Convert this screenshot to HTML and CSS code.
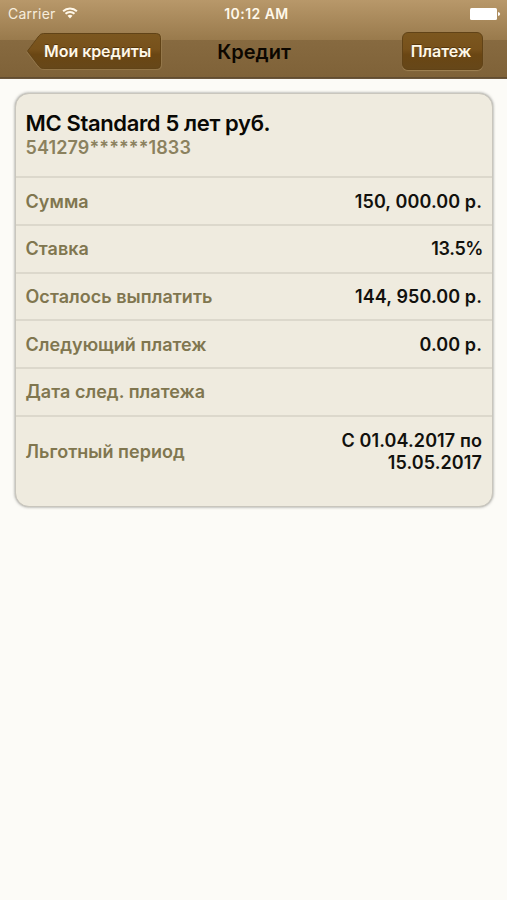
FILE: index.html
```html
<!DOCTYPE html>
<html lang="ru">
<head>
<meta charset="utf-8">
<title>Кредит</title>
<link rel="stylesheet" href="styles.css">
</head>
<body>
<header class="header">
  <div class="status">
    <div class="carrier"><span class="carrier-name">Carrier</span>
      <svg class="wifi" viewBox="0 0 16 12" width="16" height="12" fill="none" stroke="#fff8ea" stroke-width="1.9"><path d="M1.1 4.2a10 10 0 0 1 13.800 0M3.500 6.800a6.600 6.600 0 0 1 9 0"/><path d="M5.500 8.800a3.700 3.700 0 0 1 5 0L8 11.400z" fill="#fff8ea" stroke="none"/></svg>
    </div>
    <span class="time">10:12 AM</span>
    <svg class="battery" viewBox="0 0 31 12" width="31" height="12" fill="#fff"><rect width="27" height="12" rx="1.5"/><path d="M28 4q2.200 .4 2.200 2t-2.200 2z"/></svg>
  </div>
  <nav class="nav">
    <div class="back">
      <svg class="back-shape" viewBox="0 0 137 39" width="137" height="39">
        <defs><linearGradient id="brown" x1="0" y1="0" x2="0" y2="1"><stop offset="0" stop-color="#7c571f"/><stop offset=".45" stop-color="#77511b"/><stop offset=".6" stop-color="#6a4613"/><stop offset="1" stop-color="#664719"/></linearGradient></defs>
        <path d="M.8 20 12.500 4q2-2.500 5-2.500H131q4.500 0 4.500 4.500V33q0 4.500-4.500 4.500H17.500q-3 0-5-2.500z" fill="none" stroke="#a98b5c" stroke-opacity=".45"/>
        <path d="M1.500 19 12.800 4q1.700-2.500 4.700-2.500H130.500q4 0 4 4V32.500q0 4-4 4H17.500q-3 0-4.700-2.500z" fill="url(#brown)" stroke="#614317"/>
      </svg>
      <span class="back-label">Мои кредиты</span>
    </div>
    <h1 class="title">Кредит</h1>
    <div class="pay"><span>Платеж</span></div>
  </nav>
</header>
<main class="card">
  <section class="head">
    <h2 class="product">MC Standard 5 лет руб.</h2>
    <div class="number">541279******1833</div>
  </section>
  <div class="row"><span class="label">Сумма</span><span class="value">150, 000.00 р.</span></div>
  <div class="row"><span class="label">Ставка</span><span class="value percent">13.5%</span></div>
  <div class="row"><span class="label">Осталось выплатить</span><span class="value">144, 950.00 р.</span></div>
  <div class="row"><span class="label">Следующий платеж</span><span class="value">0.00 р.</span></div>
  <div class="row"><span class="label">Дата след. платежа</span></div>
  <div class="row period"><span class="label">Льготный период</span><span class="value">С 01.04.2017 по<br>15.05.2017</span></div>
</main>
</body>
</html>
```
FILE: styles.css
```css
* { box-sizing: border-box; }
body {
  margin: 0;
  min-height: 900px;
  background: #fcfbf7;
  font-family: Inter, Roboto, sans-serif;
}
.header {
  height: 79px;
  background: linear-gradient(#b8986a 0, #997a4c 40px, #876a40 40px, #7f6238 77px, #5e482b 77px, #6e5a40 79px);
}
.status {
  display: grid;
  grid-template-columns: 1fr auto 1fr;
  align-items: center;
  height: 28px;
  padding: 0 6px 0 8px;
  color: #fff8ea;
  font-size: 14px;
  line-height: 28px;
}
.carrier { display: flex; align-items: center; gap: 6px; }
.carrier-name { letter-spacing: .25px; opacity: .9; }
.wifi { margin-top: -2px; }
.time { font-weight: 600; font-size: 14px; letter-spacing: .45px; margin-left: 4px; }
.battery { justify-self: end; margin-top: -1px; }
.nav {
  display: grid;
  grid-template-columns: 1fr auto 1fr;
  align-items: start;
  padding: 4px 24px 0 26px;
}
.back { position: relative; width: 137px; height: 39px; }
.back-shape { position: absolute; inset: 0; }
.back-label {
  position: relative;
  display: block;
  padding-left: 18px;
  line-height: 38px;
}
.back-label, .pay {
  color: #fff8e8;
  font-size: 16px;
  font-weight: 600;
  letter-spacing: -.05px;
  white-space: nowrap;
  text-shadow: 0 -1px 0 rgba(60, 36, 5, .6);
}
.title {
  margin: 0 1px 0 0;
  font-size: 20px;
  font-weight: 600;
  line-height: 41px;
  color: #0c0700;
}
.pay {
  justify-self: end;
  width: 81px;
  height: 38px;
  padding-right: 3px;
  border: 1px solid #614317;
  border-radius: 6px;
  background: linear-gradient(#7c571f, #77511b 45%, #6a4613 60%, #664719);
  box-shadow: 0 1px 1px rgba(190, 160, 110, .5);
  line-height: 36px;
  text-align: center;
}
.card {
  margin: 14px 14px 0 15px;
  height: 414px;
  border: 1px solid #c9c6bd;
  border-radius: 14px;
  background: #efebdf;
  box-shadow: 0 0 3px rgba(80, 80, 75, .65);
}
.head { height: 82.400px; padding: 15px 9.500px 0; }
.product {
  margin: 0;
  font-size: 22px;
  font-weight: 600;
  line-height: 28px;
  letter-spacing: -.36px;
  white-space: nowrap;
  color: #090804;
}
.number {
  font-size: 18px;
  font-weight: 600;
  line-height: 22px;
  letter-spacing: .12px;
  color: #8b815e;
}
.row {
  display: flex;
  align-items: center;
  justify-content: space-between;
  height: 47.700px;
  padding: 1px 10px 0 9.500px;
  border-top: 2px solid #dcd8cc;
  font-size: 18px;
  font-weight: 600;
  line-height: 22px;
  white-space: nowrap;
}
.period { height: 71px; }
.label { color: #80764f; letter-spacing: .03px; }
.value { color: #12110d; text-align: right; letter-spacing: .1px; }
.percent { letter-spacing: -.4px; margin-right: -1px; }
```
